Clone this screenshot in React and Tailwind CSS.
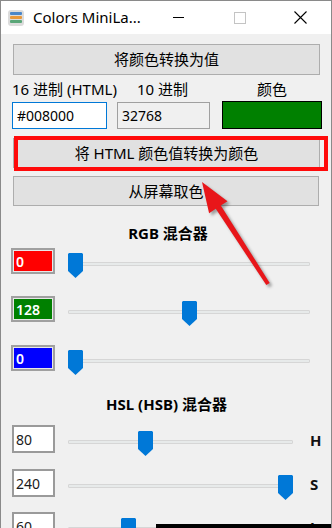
import React from 'react';

const font = "font-['Segoe_UI','Noto_Sans','Noto_Sans_CJK_SC',sans-serif]";

function Thumb() {
  return (
    <svg width="15" height="25" viewBox="0 0 15 25">
      <polygon points="1,0 14,0 15,1 15,18 7.5,25 0,18 0,1" fill="#0078d7" />
    </svg>
  );
}

function Slider({ value, max, width }) {
  const travel = width - 15;
  const left = Math.round((value / max) * travel);
  return (
    <div className="relative h-full" style={{ width }}>
      <div className="absolute left-0 right-0 top-[14px] h-[4px] rounded-[1px] border border-[#d6d6d6] bg-[#e7eaea]" />
      <div className="absolute top-[5px]" style={{ left }}>
        <Thumb />
      </div>
    </div>
  );
}

function RgbRow({ value, color, className }) {
  return (
    <div className={`flex h-[26px] ${className}`}>
      <div className="ml-[10px] flex h-[26px] w-[44px] border-2 border-[#a0a0a0]" >
        <div className="flex flex-1 items-center border border-[#e8e8e8] pl-[2px] text-[14px] font-semibold text-white" style={{ background: color }}>
          {value}
        </div>
      </div>
      <div className="ml-[13px]">
        <Slider value={value} max={255} width={242} />
      </div>
    </div>
  );
}

function HslRow({ value, label, className }) {
  return (
    <div className={`flex h-[28px] ${className}`}>
      <div className="ml-[11px] flex h-[28px] w-[43px] items-center border-2 border-[#9a9a9a] bg-white pl-[2px] text-[14px] text-[#1a1a1a]">
        {value}
      </div>
      <div className="ml-[13px] pt-[1px]">
        <Slider value={value} max={240} width={225} />
      </div>
      <div className="ml-[17px] flex h-full items-center pt-[3px] text-[15px] font-bold text-[#111]">{label}</div>
    </div>
  );
}

export default function App() {
  return (
    <div className={`relative h-[528px] w-[332px] overflow-hidden border-x border-t border-[#8a8a8a] bg-[#f0f0f0] ${font}`}>
      {/* title bar */}
      <div className="flex h-[33px] items-center bg-white">
        <div className="ml-[7px] flex h-[16px] w-[16px] flex-col justify-center gap-[1px] rounded-[3px] bg-[#dcdcdc] px-[2px]">
          <div className="h-[3px] rounded-[1px] bg-[#4a86c8]" />
          <div className="h-[3px] rounded-[1px] bg-[#e8983a]" />
          <div className="h-[3px] rounded-[1px] bg-[#5aa678]" />
        </div>
        <div className="ml-[9px] text-[15px] text-black">Colors MiniLa...</div>
        <div className="ml-auto flex h-full">
          <div className="flex w-[61px] items-center justify-center">
            <div className="h-[1px] w-[11px] bg-black" />
          </div>
          <div className="flex w-[61px] items-center justify-center">
            <div className="h-[12px] w-[12px] border border-[#c4c4c4]" />
          </div>
          <div className="flex w-[61px] items-center justify-center">
            <svg width="13" height="13" viewBox="0 0 13 13">
              <path d="M0.5 0.5 L12.5 12.5 M12.5 0.5 L0.5 12.5" stroke="#000" strokeWidth="1.1" />
            </svg>
          </div>
        </div>
      </div>

      {/* body */}
      <div className="flex flex-col text-black">
        <div className="ml-[12px] mt-[10px] flex h-[31px] w-[307px] items-center justify-center border border-[#adadad] bg-[#e1e1e1] text-[15px]">
          将颜色转换为值
        </div>

        <div className="flex h-[27px] items-center pt-[2px] text-[15px]">
          <div className="ml-[11px] w-[105px]">16 进制 (HTML)</div>
          <div className="w-[105px] pl-[20px]">10 进制</div>
          <div className="w-[100px] text-center">颜色</div>
        </div>

        <div className="flex h-[27px]">
          <div className="ml-[11px] flex h-[27px] w-[95px] items-center border border-[#0078d7] bg-white pl-[4px] text-[14px]">#008000</div>
          <div className="ml-[10px] flex h-[27px] w-[93px] items-center border border-[#a0a0a0] bg-[#f0f0f0] pl-[4px] text-[14px]">32768</div>
          <div className="ml-[12px] mt-[-1px] h-[28px] w-[100px] border border-black bg-[#008000]" />
        </div>

        <div className="ml-[12px] mt-[9px] flex h-[30px] w-[307px] items-center justify-center border border-[#adadad] bg-[#e1e1e1] text-[15px]">
          将 HTML 颜色值转换为颜色
        </div>

        <div className="ml-[12px] mt-[8px] flex h-[30px] w-[306px] items-center justify-center border border-[#adadad] bg-[#e1e1e1] text-[15px]">
          从屏幕取色
        </div>

        <div className="mt-[17px] flex h-[20px] items-center justify-center pl-[4px] text-[15px] font-bold">RGB 混合器</div>

        <RgbRow value={0} color="#ff0000" className="mt-[5px]" />
        <RgbRow value={128} color="#008000" className="mt-[22px]" />
        <RgbRow value={0} color="#0000ff" className="mt-[23px]" />

        <div className="mt-[23px] flex h-[20px] items-center justify-center pl-[1px] text-[15px] font-bold">HSL (HSB) 混合器</div>

        <HslRow value={80} label="H" className="mt-[11px]" />
        <HslRow value={240} label="S" className="mt-[16px]" />
        <HslRow value={60} label="L" className="mt-[15px]" />
      </div>

      {/* annotation: red box */}
      <div className="pointer-events-none absolute left-[13px] top-[135px] h-[35px] w-[314px] border-[4px] border-[#ff0a0a]" />

      {/* annotation: red arrow */}
      <svg className="pointer-events-none absolute left-0 top-0" width="332" height="528" viewBox="0 0 332 528">
        <defs>
          <filter id="sh" x="-20%" y="-20%" width="140%" height="140%">
            <feGaussianBlur stdDeviation="1.5" />
          </filter>
        </defs>
        <polygon
          transform="translate(2.5,2.5)"
          filter="url(#sh)"
          fill="rgba(0,0,0,0.35)"
          points="201,181 226.5,200.2 219.8,204.6 268.7,281.9 265.3,284.1 214.8,207.8 208.1,212.2"
        />
        <polygon
          fill="#e8161a"
          points="201,181 226.5,200.2 219.8,204.6 268.7,281.9 265.3,284.1 214.8,207.8 208.1,212.2"
        />
      </svg>

      {/* dark strip at bottom edge */}
      <div className="pointer-events-none absolute left-[155px] top-[523px] h-[5px] w-[177px] bg-black" />
    </div>
  );
}
